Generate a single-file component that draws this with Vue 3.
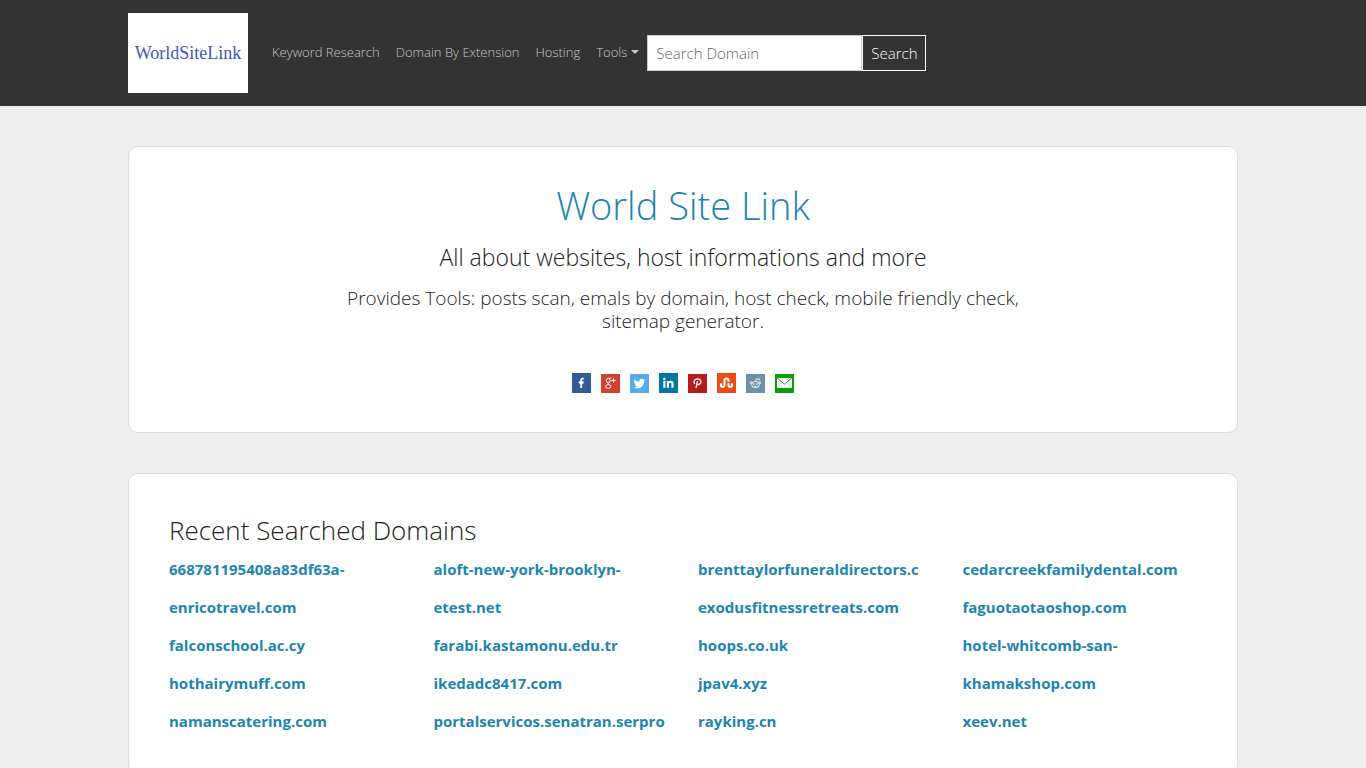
<template>
  <div class="page">
    <header class="navbar">
      <div class="container nav-inner">
        <a class="brand" href="#">WorldSiteLink</a>
        <nav class="nav-links">
          <a v-for="link in navLinks" :key="link" class="nav-link" href="#">{{ link }}</a>
          <a class="nav-link dropdown" href="#">Tools</a>
        </nav>
        <form class="search-form" @submit.prevent>
          <input v-model="keyword" type="text" placeholder="Search Domain" aria-label="Search Domain" />
          <button type="submit">Search</button>
        </form>
      </div>
    </header>

    <main class="container content">
      <section class="card hero">
        <h1>World Site Link</h1>
        <h2>All about websites, host informations and more</h2>
        <p class="lead">
          Provides Tools: posts scan, emals by domain, host check, mobile friendly check, sitemap generator.
        </p>

        <!-- share buttons -->
        <div class="share">
          <a href="#" aria-label="Facebook">
            <svg viewBox="0 0 19 20">
              <rect width="19" height="20" fill="#305c99" />
              <path d="M8.200 15v-4.500H6.700V8.600h1.500V7.300c0-1.700.9-2.500 2.400-2.500.6 0 1 .1 1.200.1v1.700h-.8c-.7 0-.8.4-.8.9v1.100h1.700l-.3 1.900h-1.400V15z" fill="#fff" />
            </svg>
          </a>
          <a href="#" aria-label="Google Plus">
            <svg viewBox="0 0 19 20">
              <rect y="1" width="19" height="19" fill="#d24130" />
              <g fill="none" stroke="#fff" stroke-width="1">
                <ellipse cx="7.300" cy="7.600" rx="1.800" ry="2.300" />
                <path d="M7.300 5.300h3M8.300 9.700c-2.300.7-1.400 1.300 0 1.900" />
                <ellipse cx="7.300" cy="13.500" rx="2.600" ry="1.900" />
                <path d="M12.500 5.300v4.400M10.300 7.500h4.400" />
              </g>
            </svg>
          </a>
          <a href="#" aria-label="Twitter">
            <svg viewBox="0 0 19 20">
              <rect y="1" width="19" height="19" fill="#55acee" />
              <path d="M15.300 6.900c-.4.2-.9.3-1.400.4.5-.3.9-.8 1.100-1.300-.5.3-1 .5-1.500.6a2.400 2.400 0 0 0-4.100 2.200C7.400 8.700 5.600 7.700 4.400 6.200c-.7 1.100-.3 2.500.7 3.200-.4 0-.8-.1-1.100-.3 0 1.200.8 2.200 2 2.400-.4.1-.7.1-1.100 0 .3 1 1.200 1.700 2.300 1.700-1 .8-2.200 1.100-3.500 1 4.900 3.100 10.400-.3 10.400-6v-.3c.5-.3.900-.7 1.200-1z" fill="#fff" />
            </svg>
          </a>
          <a href="#" aria-label="LinkedIn">
            <svg viewBox="0 0 19 20">
              <rect width="19" height="20" fill="#0077a0" />
              <path d="M4.300 8h2.200v6.700H4.300zM7.800 8h2.100v.9c.4-.7 1.100-1.100 2-1.100 2.200 0 2.700 1.400 2.700 3.300v3.600h-2.200v-3.200c0-.9-.1-1.700-1.100-1.700s-1.300.8-1.300 1.700v3.200H7.800z" fill="#fff" />
              <circle cx="5.400" cy="5.900" r="1.250" fill="#fff" />
            </svg>
          </a>
          <a href="#" aria-label="Pinterest">
            <svg viewBox="0 0 19 20">
              <rect y="1" width="19" height="19" fill="#b71c1c" />
              <path d="M6.800 10.900C5.200 9.300 6 6 9.300 5.900c2.500 0 3.700 1.400 3.500 3.200-.3 2.300-2.600 3.200-3.800 1.900M9.500 8.200L8 15.200" fill="none" stroke="#fff" stroke-width="1.300" />
            </svg>
          </a>
          <a href="#" aria-label="StumbleUpon">
            <svg viewBox="0 0 19 20">
              <rect width="19" height="20" fill="#eb4b15" />
              <path d="M4 10.200v2a1.750 1.750 0 0 0 3.500 0V7.500a2 2 0 0 1 4 0v1.200M11.500 10v2.200a1.750 1.750 0 0 0 3.500 0v-2" fill="none" stroke="#fff" stroke-width="2.100" />
            </svg>
          </a>
          <a href="#" aria-label="Reddit">
            <svg viewBox="0 0 19 20">
              <rect y="1" width="19" height="19" fill="#6b92aa" />
              <g fill="none" stroke="#fff" stroke-width=".8">
                <ellipse cx="9.500" cy="11.600" rx="3.900" ry="3.200" />
                <circle cx="5.200" cy="9.700" r="1" />
                <circle cx="13.800" cy="9.700" r="1" />
                <path d="M9.500 8.400l.8-2.700 2 .5M7.700 13c1.100.8 2.500.8 3.600 0" />
                <circle cx="13" cy="6.400" r=".7" />
              </g>
              <circle cx="8" cy="11" r=".8" fill="#fff" />
              <circle cx="11" cy="11" r=".8" fill="#fff" />
            </svg>
          </a>
          <a href="#" aria-label="Email">
            <svg viewBox="0 0 19 20">
              <rect y="1" width="19" height="19" fill="#0a9e0a" />
              <rect x="2" y="5" width="15" height="10" fill="#fff" />
              <path d="M2 4.800l7.500 6.400L17 4.800" fill="none" stroke="#0a9e0a" stroke-width=".9" />
              <path d="M2 15l4.500-5M17 15l-4.500-5" fill="none" stroke="#0a9e0a" stroke-width=".3" />
            </svg>
          </a>
        </div>
      </section>

      <section class="card recent">
        <h3>Recent Searched Domains</h3>
        <div class="domain-grid">
          <a v-for="domain in domains" :key="domain" href="#">{{ domain }}</a>
        </div>
      </section>
    </main>
  </div>
</template>

<script setup>
import { ref } from 'vue'

const keyword = ref('')

const navLinks = ['Keyword Research', 'Domain By Extension', 'Hosting']

const domains = [
  '668781195408a83df63a-',
  'aloft-new-york-brooklyn-',
  'brenttaylorfuneraldirectors.c',
  'cedarcreekfamilydental.com',
  'enricotravel.com',
  'etest.net',
  'exodusfitnessretreats.com',
  'faguotaotaoshop.com',
  'falconschool.ac.cy',
  'farabi.kastamonu.edu.tr',
  'hoops.co.uk',
  'hotel-whitcomb-san-',
  'hothairymuff.com',
  'ikedadc8417.com',
  'jpav4.xyz',
  'khamakshop.com',
  'namanscatering.com',
  'portalservicos.senatran.serpro',
  'rayking.cn',
  'xeev.net'
]
</script>

<style>
body {
  margin: 0;
  background: #eee;
}
</style>

<style scoped>
.page {
  font-family: 'Open Sans', sans-serif;
  font-size: 15px;
  font-weight: 300;
  line-height: 23px;
  color: #222;
}

.page * {
  box-sizing: border-box;
}

a {
  text-decoration: none;
}

.container {
  max-width: 1140px;
  margin: 0 auto;
  padding: 0 15px;
}

/* navbar */
.navbar {
  background: #333;
  padding: 13px 0;
}

.nav-inner {
  display: flex;
  align-items: center;
}

.brand {
  display: flex;
  align-items: center;
  justify-content: center;
  width: 120px;
  height: 80px;
  margin-right: 16px;
  background: #fff;
  color: #4058c0;
  font-family: 'Liberation Serif', serif;
  font-size: 18px;
  font-weight: 400;
}

.nav-links {
  display: flex;
}

.nav-link {
  padding: 7px 8px 9px;
  font-size: 13px;
  line-height: 20px;
  color: #c8c8c8;
}

.dropdown {
  display: flex;
  align-items: center;
  gap: 4px;
}

.dropdown::after {
  content: '';
  border-top: 4px solid;
  border-left: 4px solid transparent;
  border-right: 4px solid transparent;
}

.search-form {
  display: flex;
}

.search-form input,
.search-form button {
  height: 36px;
  margin: 0;
  padding: 0 8px;
  border-radius: 0;
  font-family: inherit;
  font-size: 15px;
  font-weight: 300;
}

.search-form input {
  width: 215px;
  border: 1px solid #ccc;
  background: #fff;
  color: #222;
}

.search-form input::placeholder {
  color: #666;
  opacity: 1;
}

.search-form button {
  border: 1px solid #fff;
  background: #333;
  color: #fff;
  cursor: pointer;
}

/* cards */
.content {
  padding-top: 40px;
}

.card {
  margin-bottom: 40px;
  padding: 40px;
  background: #fff;
  border: 1px solid #ddd;
  border-radius: 10px;
}

.hero {
  padding-top: 34px;
  padding-bottom: 39px;
  text-align: center;
}

h1,
h2,
h3 {
  margin: 0;
  font-weight: 300;
}

h1 {
  font-size: 38px;
  line-height: 48px;
  color: #1e84b0;
}

h2 {
  margin-top: 14px;
  font-size: 23px;
  line-height: 28px;
}

.lead {
  max-width: 700px;
  margin: 16px auto 40px;
  font-size: 19px;
  line-height: 23px;
}

.share {
  display: flex;
  justify-content: center;
  gap: 10px;
}

.share a,
.share svg {
  display: block;
  width: 19px;
  height: 20px;
}

h3 {
  margin-bottom: 12px;
  font-size: 26px;
  line-height: 32px;
}

.domain-grid {
  display: grid;
  grid-template-columns: repeat(4, minmax(0, 1fr));
  gap: 15px 30px;
}

.domain-grid a {
  overflow: hidden;
  white-space: nowrap;
  font-weight: 700;
  color: #1e84b0;
}
</style>
